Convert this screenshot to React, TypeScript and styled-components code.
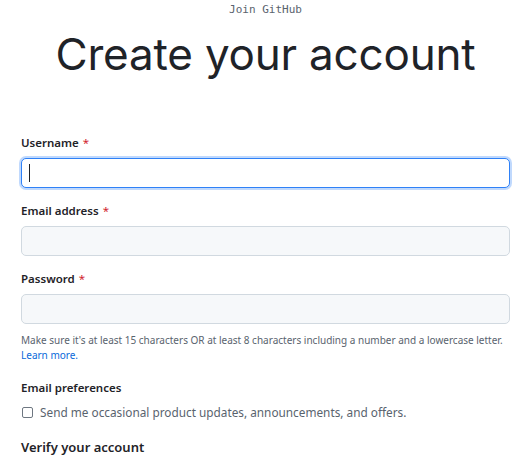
import React from "react";
import styled, { createGlobalStyle } from "styled-components";

const Global = createGlobalStyle`
  html, body { margin: 0; padding: 0; background: #ffffff; }
  body { font-family: "Noto Sans", "Open Sans", sans-serif; color: #1f2328; }
  * { box-sizing: border-box; }
`;

const Page = styled.main`
  padding: 0 22px 0 21px;
  display: flex;
  flex-direction: column;
`;

const Header = styled.header`
  display: flex;
  flex-direction: column;
  align-items: center;
`;

const Eyebrow = styled.div`
  font-family: "DejaVu Sans Mono", "Liberation Mono", monospace;
  font-size: 11px;
  line-height: 20px;
  color: #59636e;
`;

const Title = styled.h1`
  margin: 6px 0 0;
  font-family: Inter, "Noto Sans", sans-serif;
  font-weight: 400;
  font-size: 44px;
  line-height: 56px;
  letter-spacing: -0.2px;
  color: #1f2328;
`;

const Form = styled.form`
  display: flex;
  flex-direction: column;
  margin-top: 52px;
`;

const Field = styled.div`
  display: flex;
  flex-direction: column;
  gap: 6px;
  margin-bottom: 14px;
`;

const Label = styled.label`
  font-size: 11.5px;
  font-weight: 600;
  line-height: 18px;
  color: #1f2328;
`;

const Required = styled.span`
  color: #d1242f;
  margin-left: 4px;
  font-weight: 400;
`;

const InputWrap = styled.div`
  position: relative;
  display: flex;
`;

const Input = styled.input<{ $focused?: boolean }>`
  height: 30px;
  width: 100%;
  padding: 0 8px;
  font-family: inherit;
  font-size: 13px;
  color: #1f2328;
  border-radius: 5px;
  border: 1px solid ${(p) => (p.$focused ? "#2f81f7" : "#d1d9e0")};
  background: ${(p) => (p.$focused ? "#ffffff" : "#f6f8fa")};
  box-shadow: ${(p) => (p.$focused ? "0 0 0 2px rgba(47,129,247,0.3)" : "none")};
  outline: none;
  caret-color: transparent;
`;

const Caret = styled.span`
  position: absolute;
  left: 8px;
  top: 6px;
  width: 1px;
  height: 18px;
  background: #1f2328;
  pointer-events: none;
`;

const Hint = styled.p`
  margin: -5px 0 16px;
  font-size: 10px;
  line-height: 15px;
  color: #59636e;
`;

const Link = styled.a`
  color: #0969da;
  text-decoration: none;
`;

const SectionTitle = styled.div<{ $big?: boolean }>`
  font-size: ${(p) => (p.$big ? "13px" : "11.5px")};
  font-weight: 600;
  line-height: ${(p) => (p.$big ? "20px" : "18px")};
  color: #1f2328;
  margin-bottom: ${(p) => (p.$big ? "0" : "5px")};
`;

const CheckRow = styled.label`
  display: flex;
  align-items: center;
  gap: 7px;
  padding-left: 1px;
  font-size: 11.8px;
  line-height: 20px;
  color: #59636e;
  margin-bottom: 15px;
`;

const Box = styled.span`
  width: 11px;
  height: 11px;
  border: 1px solid #6e7781;
  border-radius: 2px;
  background: #fff;
  flex: none;
`;

export default function App() {
  return (
    <>
      <Global />
      <Page>
        <Header>
          <Eyebrow>Join GitHub</Eyebrow>
          <Title>Create your account</Title>
        </Header>
        <Form onSubmit={(e) => e.preventDefault()}>
          <Field>
            <Label>
              Username<Required>*</Required>
            </Label>
            <InputWrap>
              <Input $focused defaultValue="" />
              <Caret />
            </InputWrap>
          </Field>
          <Field>
            <Label>
              Email address<Required>*</Required>
            </Label>
            <Input />
          </Field>
          <Field>
            <Label>
              Password<Required>*</Required>
            </Label>
            <Input type="password" />
          </Field>
          <Hint>
            Make sure it's at least 15 characters OR at least 8 characters including a number and a lowercase letter.{" "}
            <Link href="#">Learn more.</Link>
          </Hint>
          <SectionTitle>Email preferences</SectionTitle>
          <CheckRow>
            <Box />
            Send me occasional product updates, announcements, and offers.
          </CheckRow>
          <SectionTitle $big>Verify your account</SectionTitle>
        </Form>
      </Page>
    </>
  );
}
